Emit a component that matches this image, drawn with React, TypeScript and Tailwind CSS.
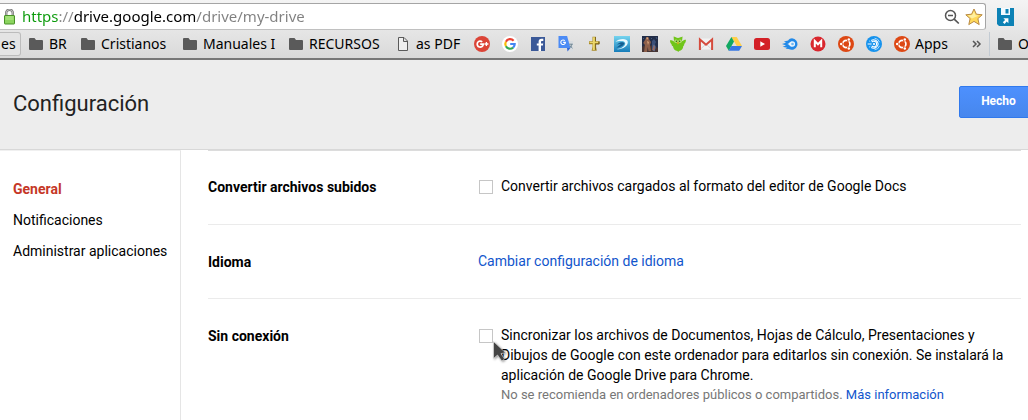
import type { ReactNode } from "react";

const chromeFont = "font-['Noto_Sans','Open_Sans',sans-serif]";

function Icon({ children, className = "size-4" }: { children: ReactNode; className?: string }) {
  return (
    <svg viewBox="0 0 16 16" className={`${className} shrink-0`} aria-hidden="true">
      {children}
    </svg>
  );
}

function FolderIcon() {
  return (
    <svg viewBox="0 0 14 12" className="h-3 w-3.5 shrink-0" aria-hidden="true">
      <path d="M1 0h4.5l1.5 2H13a1 1 0 0 1 1 1v8a1 1 0 0 1-1 1H1a1 1 0 0 1-1-1V1a1 1 0 0 1 1-1z" fill="#5a5a5a" />
    </svg>
  );
}

function PageIcon() {
  return (
    <svg viewBox="0 0 14 14" className="size-3.5 shrink-0" aria-hidden="true">
      <path d="M2.5.5h5.5l3.5 3.5v9.5h-9zM7.5.5v4h4" fill="#efefef" stroke="#5a5a5a" />
    </svg>
  );
}

function UbuntuIcon({ color = "#dd4814" }: { color?: string }) {
  return (
    <Icon>
      <circle cx="8" cy="8" r="8" fill={color} />
      <circle cx="8.3" cy="8" r="3.6" fill="none" stroke="#fff" strokeWidth="1.7" />
      <path d="M8.3 8H2M8.3 8l3.2-5.5M8.3 8l3.2 5.5" stroke={color} strokeWidth="0.9" />
      <circle cx="3.2" cy="8" r="1.9" fill={color} />
      <circle cx="10.7" cy="3.6" r="1.9" fill={color} />
      <circle cx="10.7" cy="12.4" r="1.9" fill={color} />
      <circle cx="3.2" cy="8" r="1.25" fill="#fff" />
      <circle cx="10.8" cy="3.5" r="1.25" fill="#fff" />
      <circle cx="10.8" cy="12.5" r="1.25" fill="#fff" />
    </Icon>
  );
}

const sites: { name: string; icon: ReactNode }[] = [
  {
    name: "Google+",
    icon: (
      <Icon>
        <circle cx="8" cy="8" r="8" fill="#db4437" />
        <path d="M8.2 5.9A3 3 0 1 0 9.2 8.2H6.2" fill="none" stroke="#fff" strokeWidth="1.7" />
        <path d="M12.4 6v4M10.4 8h4" stroke="#fff" strokeWidth="1.3" />
      </Icon>
    ),
  },
  {
    name: "Google",
    icon: (
      <Icon>
        <circle cx="8" cy="8" r="8" fill="#fff" />
        <g fill="none" strokeWidth="2.2">
          <path d="M11.6 4.7A4.7 4.7 0 0 0 3.9 5.7" stroke="#ea4335" />
          <path d="M3.9 5.7a4.7 4.7 0 0 0 0 4.6" stroke="#fbbc05" />
          <path d="M3.9 10.3a4.7 4.7 0 0 0 7.2 1.3" stroke="#34a853" />
          <path d="M11.1 11.6A4.7 4.7 0 0 0 12.7 8H8.2" stroke="#4285f4" />
        </g>
      </Icon>
    ),
  },
  {
    name: "Facebook",
    icon: (
      <Icon>
        <path d="M1 1h14v14H1z" fill="#3b5998" />
        <path d="M8.6 15V9.6H6.8V7.4h1.8V5.8c0-2 1.1-3 2.9-3h1.8V5h-1.2c-.9 0-1.1.4-1.1 1.1v1.3h2.2l-.3 2.2H11V15z" fill="#fff" />
      </Icon>
    ),
  },
  {
    name: "Google Translate",
    icon: (
      <Icon>
        <path d="M6 5h9.2v10.5H9.5z" fill="#d8dce0" />
        <path d="M.5 0h8.6L12.4 12H.5z" fill="#4c8bf5" />
        <path d="M9 12h3.4L9.5 15.5z" fill="#3367d6" />
        <path d="M6.8 4.7A2.3 2.3 0 1 0 7.4 6.4H5.2" fill="none" stroke="#fff" strokeWidth="1.1" />
        <path d="M11.2 8.2h3.6M13.7 8.4c-.3 1.7-1 2.8-1.9 3.5M12.3 9.6c.5 1.2 1.2 2 2.2 2.6" fill="none" stroke="#607988" strokeWidth=".9" />
      </Icon>
    ),
  },
  {
    name: "Cruz",
    icon: (
      <Icon>
        <path d="M6.5.8h3.4v4.4h3.6v3H9.9v2.5l.9 4H5.6l.9-4V8.2H3v-3h3.5z" fill="#a98b28" />
        <path d="M7 1.3h1.9v4.4H12v1.3H8.8v7H6.8v-7H3.6V5.7H7z" fill="#ead66b" />
        <path d="M9.5 1v4.2M13.1 5.5V8H9.6v5.8" fill="none" stroke="#6e591e" strokeWidth=".8" />
      </Icon>
    ),
  },
  {
    name: "Biblioteca",
    icon: (
      <Icon>
        <defs>
          <linearGradient id="sea" x2="0" y2="1">
            <stop stopColor="#75d4ef" />
            <stop offset="1" stopColor="#167cb9" />
          </linearGradient>
        </defs>
        <path d="M0 0h16v16H0z" fill="url(#sea)" />
        <path d="M1.5 6C4 2.5 13 1.5 13.8 5.8 14.3 10.5 7 14 3 13c4-.5 7.8-2.5 8.2-5.3C11.6 4.6 5 4.5 1.5 6z" fill="#eafaff" />
        <path d="M3 8.4c3-2.9 7-2.6 7.4-1C9.7 9.9 6 10.8 2.4 11.8L7 8.1z" fill="#135e91" />
      </Icon>
    ),
  },
  {
    name: "Juego",
    icon: (
      <Icon>
        <path d="M0 0h16v16H0z" fill="#222d48" />
        <path d="M0 11l4-3 3 2 4-1 5 3v4H0z" fill="#463433" />
        <path d="M4.5 1l2 .3.8 2.5L9 6l-1 3 1 6H6.5L5.7 11 5 16H2l1-7-1.8-2L3 4z" fill="#8d5f4a" />
        <path d="M4.6 1.2l1.6.3-.2 1.8H4.4zM5 5l2 1-1 3z" fill="#d8a47c" />
        <path d="M10 5l2-2 2 3-1 2 1 4-2 3-2-3z" fill="#3c5078" />
        <path d="M11.5 9l1.5 1-.5 5-2-1zM1 2l1 1M14 1l1 2M9 2l1 1" fill="#ad684b" stroke="#5874a1" strokeWidth=".6" />
      </Icon>
    ),
  },
  {
    name: "Duolingo",
    icon: (
      <Icon>
        <path d="M0 4.3c1.8 0 3 .5 4 1.2L3.6.6C5 .9 6.5 1.9 8 1.9s3.2-1 4.6-1.4L12 5.2c1.2-.9 2.5-1.6 4-1.5-.2 2.2-.8 3.6-1.8 4.2.2.8-.2 1.6-.9 2-.1 2.8-2 4.8-4.3 5.1l-.7 1-1-.9c-2.5-.4-4.1-2.2-4.3-4.8C2 9.9 1.4 9.1 1.6 8.3.6 7.5 0 6.2 0 4.3z" fill="#70c51a" />
        <circle cx="6" cy="5.2" r="1.8" fill="#b5e373" />
        <circle cx="10" cy="5.2" r="1.8" fill="#b5e373" />
        <circle cx="6.4" cy="5.2" r=".8" fill="#37680d" />
        <circle cx="9.6" cy="5.2" r=".8" fill="#37680d" />
        <path d="M6.7 6.6h2.6L8 8.4z" fill="#f6a623" />
      </Icon>
    ),
  },
  {
    name: "Gmail",
    icon: (
      <Icon>
        <path d="M1.5 2.5h13v11h-13z" fill="#f2f2f2" />
        <path d="M2 13.5l6-5.4 6 5.4" fill="none" stroke="#d5d5d5" />
        <path d="M1.9 14V3.4L8 8.7l6.1-5.3V14" fill="none" stroke="#d54b3d" strokeWidth="2" />
      </Icon>
    ),
  },
  {
    name: "Google Drive",
    icon: (
      <Icon>
        <path d="M5.4 1h5.3L16 10h-5.2z" fill="#ffcf48" />
        <path d="M5.4 1L8 5.5 2.8 14.7 0 10z" fill="#11a861" />
        <path d="M5.3 10H16l-2.8 4.8H2.6z" fill="#3777e3" />
      </Icon>
    ),
  },
  {
    name: "YouTube",
    icon: (
      <Icon>
        <rect y="2" width="16" height="12" rx="2.5" fill="#d32027" />
        <path d="M6.3 5.2L11 8l-4.7 2.8z" fill="#fff" />
      </Icon>
    ),
  },
  {
    name: "Jet",
    icon: (
      <Icon>
        <path d="M10 2.2A5.8 5.8 0 1 1 6.7 13L3.5 12.8l1.6-1L.7 10.7 4 9.5 0 8l4-1.2L2 5.6l4.1-1.1C7.1 3 8.6 2.2 10 2.2z" fill="#2289e8" />
        <path d="M5.3 8c2-.2 2.5-2.8 5-2.8a2.8 2.8 0 1 1 0 5.6c-2.5 0-3-2.6-5-2.8z" fill="#e8f3fc" />
        <circle cx="10.5" cy="8" r="1.3" fill="#70b7f1" />
      </Icon>
    ),
  },
  {
    name: "Mega",
    icon: (
      <Icon>
        <circle cx="8" cy="8" r="7.5" fill="#d9272e" />
        <path d="M4.8 11.3V5L8 8.3 11.2 5v6.3" fill="none" stroke="#fff" strokeWidth="2" />
      </Icon>
    ),
  },
  { name: "Ubuntu", icon: <UbuntuIcon /> },
  {
    name: "Radio",
    icon: (
      <Icon>
        <circle cx="8" cy="8" r="8" fill="#1592ed" />
        <path d="M5.2 4.4a4.7 4.7 0 0 1 7 3.6 4.7 4.7 0 0 1-7 3.6M5.7 6.2a2.8 2.8 0 1 1 0 3.6M1.6 8h4" fill="none" stroke="#fff" strokeWidth="1.1" />
        <circle cx="8" cy="8" r="1.1" fill="#fff" />
        <path d="M8.5 2.2a5.8 5.8 0 0 1 5.1 4M8.5 13.8a5.8 5.8 0 0 0 5.1-4M3.1 4.8l1.3 1M3.1 11.2l1.3-1" fill="none" stroke="#bce1ff" strokeWidth=".9" />
      </Icon>
    ),
  },
];

const folders = [
  { name: "BR", width: "w-[52px]" },
  { name: "Cristianos", width: "w-[102px]" },
  { name: "Manuales I", width: "w-[106px]" },
  { name: "RECURSOS", width: "w-[107px]" },
];

function AddressBar() {
  return (
    <div className="flex h-[30px] bg-linear-to-b from-[#f4f4f4] to-[#e8e8e8] pt-[3px] text-black">
      <div className="flex h-[27px] min-w-0 flex-1 items-center rounded-r-[3px] border border-l-0 border-[#a5a5a5] border-b-[#c0c0c0] bg-white pr-[2px] pl-[3px]">
        <svg viewBox="0 0 13 16" className="h-4 w-[13px] shrink-0" aria-hidden="true">
          <path d="M3.2 8V4a3.3 3.3 0 0 1 6.6 0v4" fill="none" stroke="#777" strokeWidth="2.4" />
          <path d="M3.2 8V4a3.3 3.3 0 0 1 6.6 0v4" fill="none" stroke="#d5d5d5" strokeWidth=".8" />
          <rect x="1.5" y="6.5" width="10" height="8.5" rx=".5" fill="#8bd45f" stroke="#479126" />
          <path d="M2.5 8h8M2.5 10h8" stroke="#b9ec91" />
        </svg>
        <input
          type="text"
          aria-label="Dirección"
          defaultValue="https://drive.google.com/drive/my-drive"
          className="ml-[6px] h-6 min-w-0 flex-1 bg-[linear-gradient(90deg,#0a9a0a_0_36px,#888_36px_52px,#000_52px_174px,#808080_174px)] bg-clip-text pb-[2px] text-[15px] text-transparent caret-black outline-none"
        />
        <button type="button" aria-label="Zoom" className="mr-[5px]">
          <Icon>
            <circle cx="6.5" cy="6.5" r="5" fill="none" stroke="#555" strokeWidth="1.5" />
            <path d="M4 6.5h5M10.2 10.2l4.6 4.3" stroke="#555" strokeWidth="1.7" />
          </Icon>
        </button>
        <button type="button" aria-label="Marcador">
          <svg viewBox="0 0 18 18" className="size-[18px]" aria-hidden="true">
            <path d="M9 1l2.4 5.2 5.8.6-4.3 3.8 1.3 6L9 13.4l-5.2 3.2 1.3-6L.8 6.8l5.8-.6z" fill="#ffd95b" stroke="#b98a45" strokeLinejoin="round" />
            <path d="M9 3.5l1.4 3.7 3.5.3-6.9 3-4.1-3 4.3-.4z" fill="#fff0a0" />
          </svg>
        </button>
      </div>
      <button type="button" aria-label="Guardar" className="mr-[14px] ml-[11px] self-center">
        <svg viewBox="0 0 17 18" className="h-[18px] w-[17px]" aria-hidden="true">
          <path d="M0 0h17v18H2l-2-2z" fill="#0d82b5" />
          <path d="M4 0h9v7H4z" fill="#f4fbff" />
          <path d="M8.5 1h3v4.5h-3z" fill="#0d82b5" />
          <path d="M6.4 10.2h5v5L9.7 13.5 7.6 16 5.8 14.2l2.3-2.3z" fill="#fff" />
        </svg>
      </button>
    </div>
  );
}

function BookmarksBar() {
  return (
    <nav aria-label="Marcadores" className="flex h-[30px] items-center overflow-hidden border-b-2 border-[#777] bg-linear-to-b from-[#e6e6e6] to-[#d9d9d9] text-[14px] leading-5 whitespace-nowrap text-black">
      <a href="#es" className="mr-2 flex h-6 w-[21px] shrink-0 items-center rounded-r-[3px] border border-l-0 border-[#bcbcbc] bg-[#e4e4e4] pl-px">es</a>
      {folders.map((folder) => (
        <a key={folder.name} href={`#${folder.name}`} className={`flex shrink-0 items-center gap-[6px] ${folder.width}`}>
          <FolderIcon />
          {folder.name}
        </a>
      ))}
      <a href="#pdf" className="flex w-[78px] shrink-0 items-center gap-[6px]">
        <PageIcon />
        as PDF
      </a>
      <div className="flex shrink-0 gap-3">
        {sites.map((site) => (
          <a key={site.name} href="#site" aria-label={site.name}>
            {site.icon}
          </a>
        ))}
        <a href="#apps" className="flex items-center gap-[5px]">
          <UbuntuIcon />
          <span className="-my-1">Apps</span>
        </a>
      </div>
      <button type="button" aria-label="Más marcadores" className="mr-[7px] ml-auto shrink-0">
        <svg viewBox="0 0 10 8" className="h-2 w-2.5" aria-hidden="true">
          <path d="M1 1l3 3-3 3M5 1l3 3-3 3" fill="none" stroke="#555" strokeWidth="1.5" />
        </svg>
      </button>
      <a href="#otros" className="flex h-6 w-[39px] shrink-0 items-center gap-[6px] overflow-hidden border-l border-[#c3cbd3] pl-2">
        <FolderIcon />
        Otros
      </a>
    </nav>
  );
}

function Row({ title, children }: { title: string; children: ReactNode }) {
  return (
    <section className="grid grid-cols-[270px_minmax(0,1fr)] border-b border-[#ebebeb] py-[26px] first:pt-[25px] first:pb-[27px] last:border-b-0">
      <h2 className="pt-px font-bold">{title}</h2>
      <div>{children}</div>
    </section>
  );
}

function Checkbox({ id }: { id: string }) {
  return <input id={id} type="checkbox" className="mt-[4px] ml-px size-3.5 shrink-0 appearance-none border border-[#c6c6c6] bg-white checked:bg-[#4d90fe]" />;
}

export default function App() {
  return (
    <div className="overflow-hidden bg-white font-[Roboto,sans-serif] text-[14px] leading-5 text-black">
      <div className={chromeFont}>
        <AddressBar />
        <BookmarksBar />
      </div>
      <header className="flex h-[90px] items-start justify-between border-b border-[#d8d8d8] bg-[#ededed] pl-[13px]">
        <h1 className="mt-[30px] text-[22px] leading-7 text-[#222]">Configuración</h1>
        <button type="button" className="mt-[26px] -mr-[10px] h-8 w-[79px] rounded-[2px] border border-[#3079ed] bg-linear-to-b from-[#4d90fe] to-[#4787ed] pb-[2px] text-[12px] font-bold text-white">
          Hecho
        </button>
      </header>
      <div className="flex">
        <nav aria-label="Configuración" className="flex w-[181px] shrink-0 flex-col gap-[11px] border-t border-r border-t-[#f0f0f0] border-r-[#e5e5e5] pt-7 pl-[13px] whitespace-nowrap">
          <a href="#general" className="font-bold text-[#c53727]">General</a>
          <a href="#notificaciones">Notificaciones</a>
          <a href="#aplicaciones">Administrar aplicaciones</a>
        </nav>
        <main className="min-w-0 flex-1 pr-[7px] pl-[27px]">
          <div className="border-t border-[#dcdcdc]">
            <Row title="Convertir archivos subidos">
              <div className="flex gap-2">
                <Checkbox id="convert" />
                <label htmlFor="convert">Convertir archivos cargados al formato del editor de Google Docs</label>
              </div>
            </Row>
            <Row title="Idioma">
              <a href="#idioma" className="text-[#1155cc]">Cambiar configuración de idioma</a>
            </Row>
            <Row title="Sin conexión">
              <div className="relative flex gap-2">
                <Checkbox id="offline" />
                <div className="pr-3">
                  <label htmlFor="offline" className="block">
                    Sincronizar los archivos de Documentos, Hojas de Cálculo, Presentaciones y Dibujos de Google con este ordenador para editarlos sin conexión. Se instalará la aplicación de Google Drive para Chrome.
                  </label>
                  <p className="text-[13px] leading-5 text-[#777]">
                    No se recomienda en ordenadores públicos o compartidos.{" "}
                    <a href="#info" className="text-[#1155cc]">Más información</a>
                  </p>
                </div>
                <svg viewBox="0 0 16 22" className="pointer-events-none absolute top-4 left-[15px] h-[22px] w-4 drop-shadow-[1px_1px_1px_#0006]" aria-hidden="true">
                  <path d="M.5.5v17l4-3.5 4.3 6 2.8-2-3.6-5.3 4.5-1z" fill="#444" stroke="#e8e8e8" strokeWidth=".6" />
                </svg>
              </div>
            </Row>
          </div>
        </main>
      </div>
    </div>
  );
}
